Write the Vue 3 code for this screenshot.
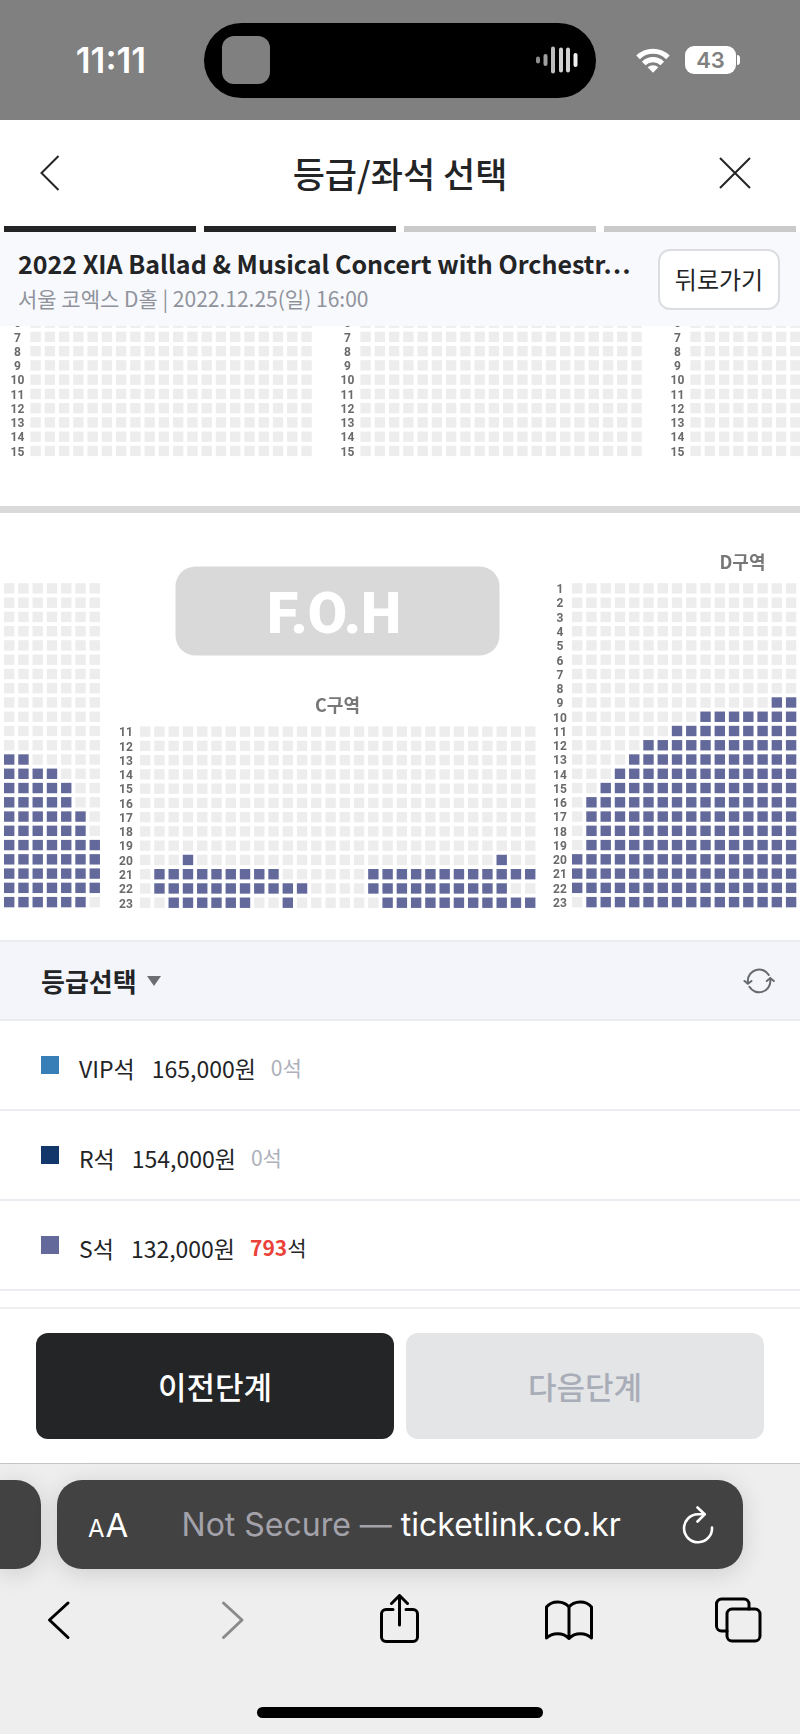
<script setup>
const PITCH = 14.26
const SEAT = 10.4

const range = (from, to) => Array.from({ length: to - from + 1 }, (_, i) => from + i)

// open: row number -> list of [first, last] column spans that are on sale
const blocks = [
  { id: 'front-left', x: 30.4, y: -8.6, cols: 20, first: 6, last: 15, labelX: 17.5, open: {} },
  { id: 'front-center', x: 360.4, y: -8.6, cols: 20, first: 6, last: 15, labelX: 347.5, open: {} },
  { id: 'front-right', x: 690.4, y: -8.6, cols: 8, first: 6, last: 15, labelX: 677.5, open: {} },
  {
    id: 'B', x: 4, y: 257.2, cols: 7, first: 1, last: 23, labelX: null,
    open: {
      13: [[0, 1]], 14: [[0, 3]], 15: [[0, 4]], 16: [[0, 4]], 17: [[0, 5]], 18: [[0, 5]],
      19: [[0, 6]], 20: [[0, 6]], 21: [[0, 6]], 22: [[0, 6]], 23: [[0, 5]],
    },
  },
  {
    id: 'C', x: 140, y: 400.4, cols: 28, first: 11, last: 23, labelX: 126,
    open: {
      20: [[3, 3], [25, 25]], 21: [[1, 9], [16, 27]],
      22: [[1, 11], [16, 25]], 23: [[2, 7], [10, 10], [17, 27]],
    },
  },
  {
    id: 'D', x: 572, y: 257.2, cols: 16, first: 1, last: 23, labelX: 560,
    open: {
      9: [[14, 15]], 10: [[9, 15]], 11: [[7, 15]], 12: [[5, 15]], 13: [[4, 15]], 14: [[3, 15]],
      15: [[2, 15]], 16: [[1, 15]], 17: [[1, 15]], 18: [[1, 15]], 19: [[1, 15]],
      20: [[0, 15]], 21: [[0, 15]], 22: [[0, 15]], 23: [[1, 15]],
    },
  },
].map((b) => ({
  ...b,
  rows: range(b.first, b.last).map((n, i) => ({
    n,
    y: b.y + i * PITCH,
    seats: range(0, b.cols - 1).map((c) => ({
      x: b.x + c * PITCH,
      open: (b.open[n] || []).some(([from, to]) => c >= from && c <= to),
    })),
  })),
}))

const steps = [true, true, false, false]

const grades = [
  { name: 'VIP석', price: '165,000원', left: 0, tone: 'vip' },
  { name: 'R석', price: '154,000원', left: 0, tone: 'r' },
  { name: 'S석', price: '132,000원', left: 793, tone: 's' },
]
</script>

<template>
  <div class="screen">
    <div class="status">
      <time class="clock">11:11</time>
      <div class="island">
        <span class="art"></span>
        <svg class="wave" width="42" height="28" viewBox="0 0 42 28" fill="none" stroke-width="4" stroke-linecap="round" aria-hidden="true">
          <path d="M2 12.500v3" stroke="#8c8c8c" />
          <path d="M9.500 10v8" stroke="#a0a0a0" />
          <path d="M17 2.500v23" stroke="#bcbcbc" />
          <path d="M25 3.500v21M32 3.500v21" stroke="#d2d2d2" />
          <path d="M39.500 9v10" stroke="#f0f0f0" />
        </svg>
      </div>
      <div class="signals">
        <svg width="34" height="26" viewBox="0 0 36 26" fill="none" stroke="#fff" stroke-width="5.500" aria-label="Wi-Fi">
          <path d="M2.200 10.200a22.600 22.600 0 0 1 31.600 0" />
          <path d="M8.200 16.700a14 14 0 0 1 19.600 0" />
          <path d="M18 26.500l-5.600-5.800a8.200 8.200 0 0 1 11.200 0z" fill="#fff" stroke="none" />
        </svg>
        <span class="battery"><span class="cell">43</span><span class="cap"></span></span>
      </div>
    </div>

    <header class="head">
      <button class="icon-btn" type="button" aria-label="뒤로">
        <svg width="20" height="36" viewBox="0 0 20 36" fill="none" stroke="#232426" stroke-width="2"><path d="M18.500 1L1.500 18l17 17" /></svg>
      </button>
      <h1>등급/좌석 선택</h1>
      <button class="icon-btn close" type="button" aria-label="닫기">
        <svg width="32" height="32" viewBox="0 0 32 32" fill="none" stroke="#232426" stroke-width="2"><path d="M1 1l30 30M31 1L1 31" /></svg>
      </button>
    </header>

    <div class="steps">
      <span v-for="(done, i) in steps" :key="i" class="step" :class="{ done }"></span>
    </div>

    <section class="event">
      <div class="event-text">
        <h2>2022 XIA Ballad &amp; Musical Concert with Orchestr⋯</h2>
        <p>서울 코엑스 D홀 | 2022.12.25(일) 16:00</p>
      </div>
      <button class="return" type="button">뒤로가기</button>
    </section>

    <svg class="map" viewBox="0 0 800 614" role="img" aria-label="좌석 배치도">
      <g class="soft">
        <rect x="-4" y="180" width="808" height="7" fill="#dadada" />
        <rect x="175.500" y="240.500" width="324" height="89" rx="20" fill="#d9d9d9" />
        <text class="foh" x="334" y="307">F.O.H</text>
        <text class="zone" x="337.500" y="386">C구역</text>
        <text class="zone" x="742.500" y="243">D구역</text>
        <g v-for="b in blocks" :key="b.id">
          <template v-for="row in b.rows" :key="row.n">
            <text v-if="b.labelX" class="row-no" :x="b.labelX" :y="row.y + 10">{{ row.n }}</text>
            <rect
              v-for="s in row.seats" :key="s.x" :x="s.x" :y="row.y" :width="SEAT" :height="SEAT"
              :fill="s.open ? '#636a9b' : '#ededed'"
            />
          </template>
        </g>
      </g>
    </svg>

    <section class="grades">
      <div class="grade-head">
        <button class="grade-toggle" type="button">
          등급선택
          <svg width="14" height="10" viewBox="0 0 14 10" aria-hidden="true"><path d="M0 0h14L7 10z" fill="#6b6d70" /></svg>
        </button>
        <button class="icon-btn" type="button" aria-label="새로고침">
          <svg width="32" height="28" viewBox="0 0 32 28" fill="none" stroke="#66696d" stroke-width="2" stroke-linecap="round">
            <path d="M4.800 15.500V14a11.300 11.300 0 0 1 21-6" />
            <path d="M27.400 12v2a11.300 11.300 0 0 1-21 5.800" />
            <path d="M1.500 14l3.400 2.800L8.500 14M23.800 14l3.500-2.900 3.500 2.900" />
          </svg>
        </button>
      </div>
      <ul>
        <li v-for="g in grades" :key="g.name">
          <span class="swatch" :class="g.tone"></span>
          <span class="name">{{ g.name }}</span>
          <span class="price">{{ g.price }}</span>
          <span class="left" :class="{ some: g.left }"><b v-if="g.left">{{ g.left }}</b><template v-else>0</template>석</span>
        </li>
      </ul>
    </section>

    <footer class="actions">
      <button class="prev" type="button">이전단계</button>
      <button class="next" type="button" disabled>다음단계</button>
    </footer>

    <div class="browser">
      <div class="tabs">
        <span class="tab-side"></span>
        <div class="tab">
          <button class="aa" type="button" aria-label="Page settings"><small>A</small>A</button>
          <button class="address" type="button"><span>Not Secure — </span>ticketlink.co.kr</button>
          <button class="icon-btn" type="button" aria-label="Reload">
            <svg width="32" height="38" viewBox="0 0 32 38" fill="none" stroke="#fff" stroke-width="2.600" stroke-linecap="round" stroke-linejoin="round">
              <path d="M22.500 8.300H16A14 14 0 1 0 30 21.500" />
              <path d="M15.500 1.500l7.200 6.800-7.200 7.200" />
            </svg>
          </button>
        </div>
      </div>
      <nav class="tools">
        <button type="button" aria-label="Back">
          <svg width="50" height="52" viewBox="0 0 50 52"><path d="M34 9L15.500 26 34 43.500" /></svg>
        </button>
        <button type="button" aria-label="Forward" disabled>
          <svg width="50" height="52" viewBox="0 0 50 52"><path d="M19.500 9L38 26 19.500 43.500" /></svg>
        </button>
        <button type="button" aria-label="Share">
          <svg width="50" height="52" viewBox="0 0 50 52"><path d="M19 15.500h-7a4.500 4.500 0 0 0-4.500 4.500v23a4.500 4.500 0 0 0 4.500 4.500h27a4.500 4.500 0 0 0 4.500-4.500V20a4.500 4.500 0 0 0-4.500-4.500h-7M25.500 31V2M17.500 9.500l8-8 8 8" /></svg>
        </button>
        <button type="button" aria-label="Bookmarks">
          <svg width="50" height="52" viewBox="0 0 50 52"><path d="M25 44.500V13C20 6.500 8 6 2.500 13v31C8 38.500 19 38 25 44.500 31 38 42 38.500 47.500 44V13C42 6 30 6.500 25 13" /></svg>
        </button>
        <button type="button" aria-label="Tabs">
          <svg width="50" height="52" viewBox="0 0 50 52"><rect x="13" y="15" width="33" height="32" rx="5" /><path d="M13 37H7.500a5 5 0 0 1-5-5V10a5 5 0 0 1 5-5H30a5 5 0 0 1 5 5v5" /></svg>
        </button>
      </nav>
      <div class="home"></div>
    </div>
  </div>
</template>

<style>
body {
  margin: 0;
}
</style>

<style scoped>
* {
  box-sizing: border-box;
}
.screen {
  display: flex;
  flex-direction: column;
  min-height: 100vh;
  overflow: hidden;
  background: #fff;
  color: #232426;
  font-family: "Noto Sans CJK KR", sans-serif;
}
button {
  padding: 0;
  border: 0;
  background: none;
  color: inherit;
  font: inherit;
}
svg {
  display: block;
  flex: none;
}
h1, h2, p, ul {
  margin: 0;
  padding: 0;
  list-style: none;
}

.status {
  display: grid;
  grid-template-columns: 1fr 392px 1fr;
  align-items: center;
  height: 120px;
  background: #808080;
  color: #fff;
  font-family: Inter, sans-serif;
}
.clock {
  padding-left: 18px;
  text-align: center;
  font-size: 35px;
  font-weight: 600;
}
.island {
  display: flex;
  align-items: center;
  justify-content: space-between;
  height: 75px;
  padding: 0 18px;
  border-radius: 38px;
  background: #000;
}
.art {
  width: 48px;
  height: 48px;
  border-radius: 12px;
  background: #808080;
}
.signals {
  display: flex;
  align-items: center;
  gap: 15px;
  padding-left: 40px;
}
.battery {
  display: flex;
  align-items: center;
  gap: 1px;
}
.cell {
  width: 51px;
  border-radius: 9px;
  background: #fff;
  color: #808080;
  text-align: center;
  font-size: 22px;
  font-weight: 600;
  line-height: 28px;
}
.cap {
  width: 3px;
  height: 10px;
  border-radius: 0 3px 3px 0;
  background: #fff;
}

.head {
  display: grid;
  grid-template-columns: 1fr auto 1fr;
  align-items: center;
  height: 106px;
  padding: 0 49px 0 40px;
}
.head h1 {
  padding-left: 9px;
  font-size: 35px;
  font-weight: 500;
  line-height: 52px;
}
.close {
  justify-self: end;
}
.steps {
  display: flex;
  gap: 8px;
  padding: 0 4px;
}
.step {
  flex: 1;
  height: 6px;
  background: #cacaca;
}
.step.done {
  background: #232426;
}

.event {
  display: flex;
  align-items: center;
  justify-content: space-between;
  gap: 16px;
  padding: 12px 20px 12px 18px;
  background: #f8f9fc;
}
.event-text {
  min-width: 0;
  white-space: nowrap;
}
.event h2 {
  font-family: "Noto Sans CJK JP", sans-serif;
  font-size: 25px;
  font-weight: 700;
  line-height: 38px;
}
.event p {
  color: #90939c;
  font-size: 21px;
  line-height: 32px;
}
.return {
  flex: none;
  width: 122px;
  height: 61px;
  padding-bottom: 2px;
  border: 2px solid #dcdde1;
  border-radius: 12px;
  background: #fff;
  font-size: 24px;
}

.map {
  width: 100%;
  height: auto;
}
.soft {
  filter: blur(0.6px);
}
.row-no, .zone, .foh {
  text-anchor: middle;
}
.row-no {
  fill: #6a6a6a;
  font: 700 12px Roboto, sans-serif;
}
.zone {
  fill: #777;
  font: 700 18px "Noto Sans CJK KR", sans-serif;
}
.foh {
  fill: #fff;
  font: 900 57px Roboto, sans-serif;
}

.grade-head {
  display: flex;
  align-items: center;
  justify-content: space-between;
  height: 81px;
  padding: 0 25px 0 41px;
  border: solid #ebecf0;
  border-width: 2px 0;
  background: #f4f5fa;
}
.grade-toggle {
  display: flex;
  align-items: center;
  gap: 10px;
  font-size: 26px;
  font-weight: 700;
}
.grades li {
  display: flex;
  align-items: center;
  height: 90px;
  padding: 6px 41px 0;
  border-bottom: 2px solid #ebecf1;
  font-size: 23px;
}
.swatch {
  width: 18px;
  height: 18px;
  margin: 0 20px 6px 0;
}
.vip { background: #377fb6; }
.r { background: #14376b; }
.s { background: #636a9b; }
.name {
  margin-right: 17px;
}
.price {
  margin-right: 15px;
}
.left {
  padding-bottom: 2px;
  color: #adb0bb;
  font-size: 21px;
}
.left.some {
  color: #232426;
}
.left b {
  color: #ea4138;
}

.actions {
  display: flex;
  gap: 12px;
  margin-top: 16px;
  padding: 24px 36px;
  border-top: 2px solid #efeff0;
}
.actions button {
  flex: 1;
  height: 106px;
  padding-bottom: 2px;
  border-radius: 12px;
  font-size: 31px;
  font-weight: 500;
}
.prev {
  background: #242527;
  color: #fff;
}
.next {
  background: #e4e5e7;
  color: #a9adb8;
}

.browser {
  flex: 1;
  border-top: 1px solid #c4c4c4;
  background: #eee;
  font-family: Inter, sans-serif;
}
.tabs {
  display: flex;
  gap: 16px;
  padding: 16px 57px 0 0;
}
.tab-side, .tab {
  height: 89px;
  background: #424242;
  box-shadow: 0 4px 24px rgba(0, 0, 0, 0.14);
}
.tab-side {
  width: 41px;
  border-radius: 0 25px 25px 0;
}
.tab {
  display: flex;
  flex: 1;
  align-items: center;
  justify-content: space-between;
  padding: 0 29px 0 31px;
  border-radius: 25px;
  color: #fff;
}
.aa {
  font-size: 33px;
}
.aa small {
  margin-right: 1px;
  font-size: 24px;
}
.address {
  padding-right: 8px;
  font-size: 32px;
  white-space: pre;
}
.address span {
  color: #a3a2aa;
}
.tools {
  display: flex;
  justify-content: space-between;
  padding: 25px 36px 0 34px;
}
.tools svg {
  fill: none;
  stroke: #000;
  stroke-width: 3;
  stroke-linecap: round;
  stroke-linejoin: round;
}
.tools button:disabled svg {
  stroke: #8a8a8a;
}
.home {
  width: 286px;
  height: 11px;
  margin: 61px auto 16px;
  border-radius: 6px;
  background: #000;
}
</style>
